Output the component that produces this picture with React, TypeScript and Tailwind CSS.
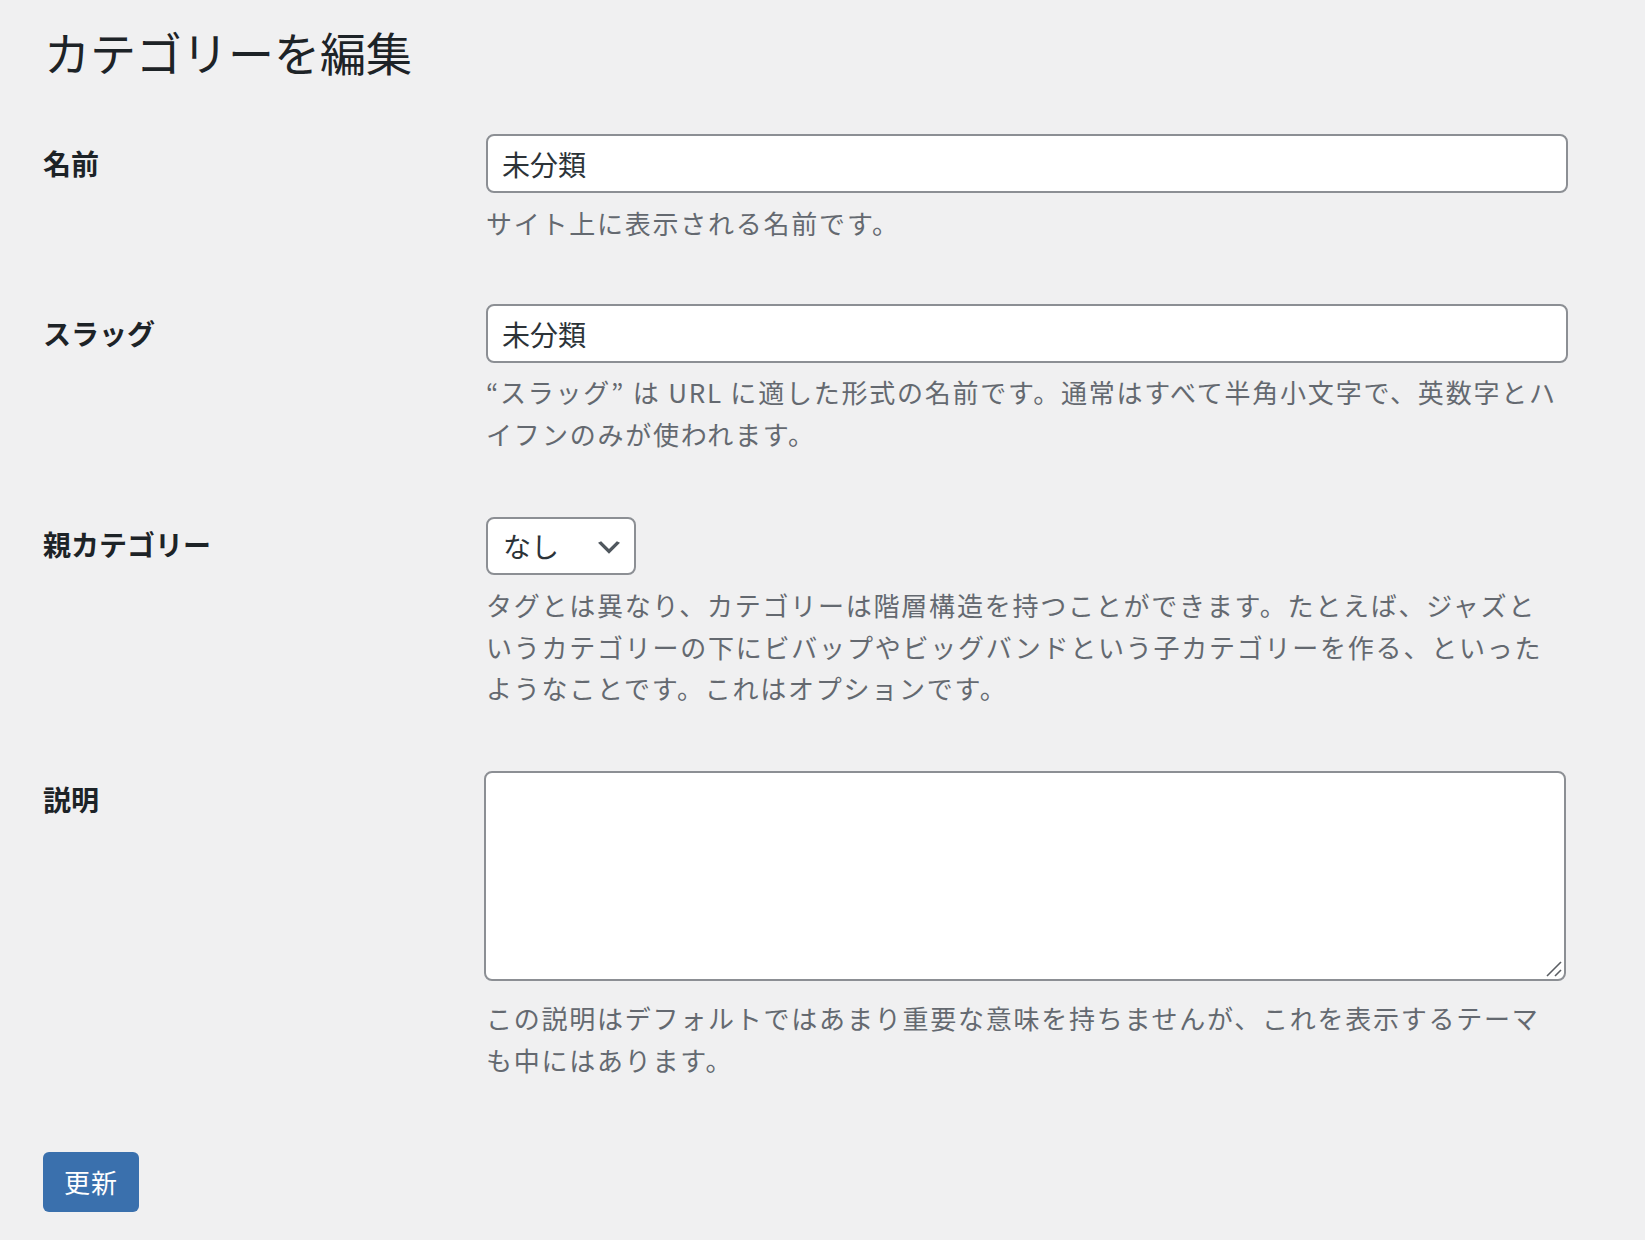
import React from "react";

const font = "font-['Noto_Sans_CJK_JP',sans-serif]";

function Label({ children, pt }: { children: React.ReactNode; pt: string }) {
  return (
    <div className={`w-[443px] shrink-0 ${pt}`}>
      <div className="text-[28px] leading-[36px] font-bold text-[#1d2327]">{children}</div>
    </div>
  );
}

function Desc({ lines, mt, lh }: { lines: string[]; mt: string; lh: string }) {
  return (
    <div className={`${mt} text-[26px] ${lh} tracking-[1.76px] text-[#646970]`}>
      {lines.map((l, i) => (
        <div key={i} className="whitespace-nowrap">
          {l}
        </div>
      ))}
    </div>
  );
}

export default function App() {
  return (
    <div className={`min-h-screen bg-[#f0f0f1] pl-[43px] pt-[28px] pb-[28px] ${font}`}>
      <h1 className="text-[46px] leading-[46px] font-normal text-[#1d2327] pl-[1px]">カテゴリーを編集</h1>

      {/* 名前 */}
      <div className="mt-[60px] flex">
        <Label pt="pt-[11px]">名前</Label>
        <div className="w-[1082px]">
          <input
            readOnly
            defaultValue="未分類"
            className={`block h-[59px] w-full rounded-[8px] border-2 border-[#8c8f94] bg-white px-[14px] text-[28px] text-[#2c3338] outline-none ${font}`}
          />
          <Desc mt="mt-[9px]" lh="leading-[42px]" lines={["サイト上に表示される名前です。"]} />
        </div>
      </div>

      {/* スラッグ */}
      <div className="mt-[60px] flex">
        <Label pt="pt-[11px]">スラッグ</Label>
        <div className="w-[1082px]">
          <input
            readOnly
            defaultValue="未分類"
            className={`block h-[59px] w-full rounded-[8px] border-2 border-[#8c8f94] bg-white px-[14px] text-[28px] text-[#2c3338] outline-none ${font}`}
          />
          <Desc
            mt="mt-[8px]"
            lh="leading-[42px]"
            lines={[
              "“スラッグ” は URL に適した形式の名前です。通常はすべて半角小文字で、英数字とハ",
              "イフンのみが使われます。",
            ]}
          />
        </div>
      </div>

      {/* 親カテゴリー */}
      <div className="mt-[62px] flex">
        <Label pt="pt-[9px]">親カテゴリー</Label>
        <div className="w-[1082px]">
          <div className="flex h-[58px] w-[150px] items-center justify-between rounded-[8px] border-2 border-[#8c8f94] bg-white pl-[15px] pr-[14px]">
            <span className="text-[28px] text-[#2c3338]">なし</span>
            <svg width="22" height="13" viewBox="3 6 14 8" className="mt-[3px]">
              <path d="M5 6l5 5 5-5 2 1-7 7-7-7 2-1z" fill="#50575e" />
            </svg>
          </div>
          <Desc
            mt="mt-[9px]"
            lh="leading-[41.5px]"
            lines={[
              "タグとは異なり、カテゴリーは階層構造を持つことができます。たとえば、ジャズと",
              "いうカテゴリーの下にビバップやビッグバンドという子カテゴリーを作る、といった",
              "ようなことです。これはオプションです。",
            ]}
          />
        </div>
      </div>

      {/* 説明 */}
      <div className="mt-[62px] flex">
        <Label pt="pt-[10px]">説明</Label>
        <div className="w-[1082px]">
          <div className="relative -ml-[2px] h-[210px] w-[1082px]">
            <textarea
              className={`block h-full w-full resize-none rounded-[8px] border-2 border-[#8c8f94] bg-white px-[14px] py-[8px] text-[28px] outline-none ${font}`}
            />
            <svg className="absolute right-[3px] bottom-[3px]" width="18" height="18" viewBox="0 0 18 18">
              <line x1="2" y1="16" x2="16" y2="2" stroke="#5a5e63" strokeWidth="1.6" />
              <line x1="10" y1="16" x2="16" y2="10" stroke="#5a5e63" strokeWidth="1.6" />
            </svg>
          </div>
          <Desc
            mt="mt-[16px]"
            lh="leading-[42px]"
            lines={[
              "この説明はデフォルトではあまり重要な意味を持ちませんが、これを表示するテーマ",
              "も中にはあります。",
            ]}
          />
        </div>
      </div>

      <div className="mt-[71px]">
        <button className="flex h-[60px] w-[96px] items-center justify-center rounded-[6px] bg-[#3a70ad] text-[26px] tracking-[1px] text-white">
          更新
        </button>
      </div>
    </div>
  );
}
